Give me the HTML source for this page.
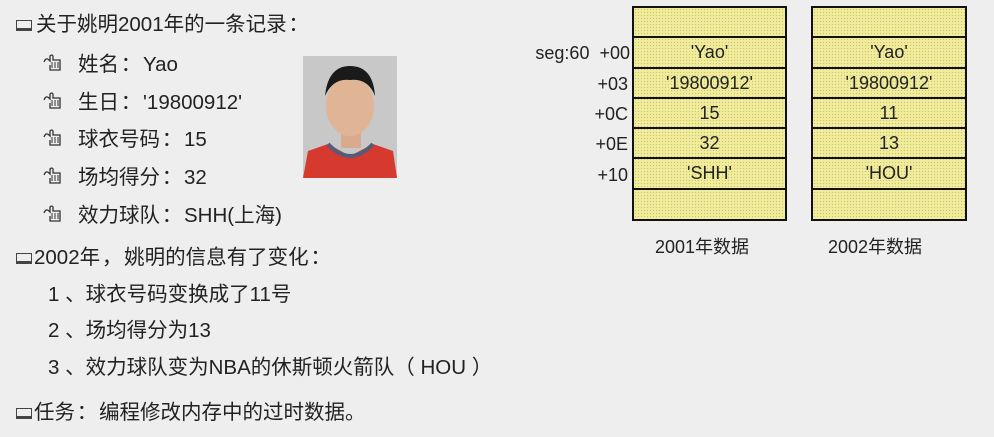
<!DOCTYPE html>
<html><head><meta charset="utf-8"><style>
body{margin:0;width:994px;height:437px;background:#eeeeee;position:relative;overflow:hidden;font-family:"Liberation Sans","Noto Sans CJK SC",sans-serif;color:#222;font-size:20.5px}
.l{position:absolute;white-space:nowrap;line-height:26px;height:26px}
.p{font-family:"Noto Sans CJK SC",sans-serif;display:inline-block;width:24px;text-align:center}
.ic{display:inline-block;width:16px;height:11px;border:1.5px solid #444;border-bottom:3px solid #444;box-sizing:border-box;margin-right:4px;vertical-align:0px}
.hand{position:absolute}
.t{position:absolute;border:2px solid #111;box-sizing:border-box;background-color:#f0ec9a;background-image:radial-gradient(#c9c27a 0.6px,transparent 0.8px);background-size:3px 3px}
.c{height:30.3px;border-bottom:2px solid #111;box-sizing:border-box;text-align:center;line-height:28px;font-size:18px}
.c:last-child{border-bottom:none}
.o{position:absolute;font-size:18px;text-align:right;width:100px;line-height:24px}
.cap{position:absolute;font-size:18px}
</style></head><body>
<svg width="0" height="0" style="position:absolute"><defs><g id="h"><path d="M1 9 Q3 4 6 7 L7 8 L7 3 Q9 1 10 3 L10 7 L17 7 L17 17 L7 17 L7 12" fill="none" stroke="#333" stroke-width="1.3"/><path d="M9 9v6M12 9v6M15 9v6" stroke="#333" stroke-width="1"/></g></defs></svg>
<div class="l" style="left:16px;top:9px"><span class="ic"></span>关于姚明2001年的一条记录<span class="p">：</span></div>
<svg class="hand" style="left:43px;top:53px" width="20" height="20"><use href="#h"/></svg><div class="l" style="left:78px;top:49px">姓名<span class="p">：</span>Yao</div>
<svg class="hand" style="left:43px;top:91px" width="20" height="20"><use href="#h"/></svg><div class="l" style="left:78px;top:87px">生日<span class="p">：</span>'19800912'</div>
<svg class="hand" style="left:43px;top:128px" width="20" height="20"><use href="#h"/></svg><div class="l" style="left:78px;top:124px">球衣号码<span class="p">：</span>15</div>
<svg class="hand" style="left:43px;top:166px" width="20" height="20"><use href="#h"/></svg><div class="l" style="left:78px;top:162px">场均得分<span class="p">：</span>32</div>
<svg class="hand" style="left:43px;top:204px" width="20" height="20"><use href="#h"/></svg><div class="l" style="left:78px;top:200px">效力球队<span class="p">：</span>SHH(上海)</div>
<svg style="position:absolute;left:303px;top:56px" width="94" height="122">
<rect width="94" height="122" fill="#c8c8c8"/>
<path d="M0 122 L5 95 L25 88 L47 100 L70 88 L90 95 L94 122Z" fill="#d63a2e"/>
<path d="M25 88 Q47 112 70 88" fill="none" stroke="#555c7a" stroke-width="4"/>
<rect x="38" y="70" width="20" height="22" fill="#d9ab8c"/>
<ellipse cx="47" cy="50" rx="24" ry="30" fill="#e0b596"/>
<path d="M22 40 Q25 10 47 10 Q70 10 72 40 Q65 22 47 24 Q30 22 22 40Z" fill="#1a1a1a"/>
</svg>
<div class="l" style="left:16px;top:242px"><span class="ic" style="margin-right:2px"></span>2002年<span class="p">，</span>姚明的信息有了变化<span class="p">：</span></div>
<div class="l" style="left:48px;top:282px">1 、球衣号码变换成了11号</div>
<div class="l" style="left:48px;top:318px">2 、场均得分为13</div>
<div class="l" style="left:48px;top:355px">3 、效力球队变为NBA的休斯顿火箭队（ HOU ）</div>
<div class="l" style="left:16px;top:397px"><span class="ic" style="margin-right:2px"></span>任务<span class="p">：</span>编程修改内存中的过时数据。</div>

<div class="o" style="left:528px;top:41px;width:102px">seg:60 &nbsp;+00</div>
<div class="o" style="left:528px;top:72px">+03</div>
<div class="o" style="left:528px;top:102px">+0C</div>
<div class="o" style="left:528px;top:132px">+0E</div>
<div class="o" style="left:528px;top:163px">+10</div>
<div class="t" style="left:632px;top:6px;width:155px;height:215px">
<div class="c"></div><div class="c">'Yao'</div><div class="c">'19800912'</div><div class="c">15</div><div class="c">32</div><div class="c">'SHH'</div><div class="c"></div></div>
<div class="t" style="left:811px;top:6px;width:156px;height:215px">
<div class="c"></div><div class="c">'Yao'</div><div class="c">'19800912'</div><div class="c">11</div><div class="c">13</div><div class="c">'HOU'</div><div class="c"></div></div>
<div class="cap" style="left:655px;top:233px">2001年数据</div>
<div class="cap" style="left:828px;top:233px">2002年数据</div>
</body></html>
